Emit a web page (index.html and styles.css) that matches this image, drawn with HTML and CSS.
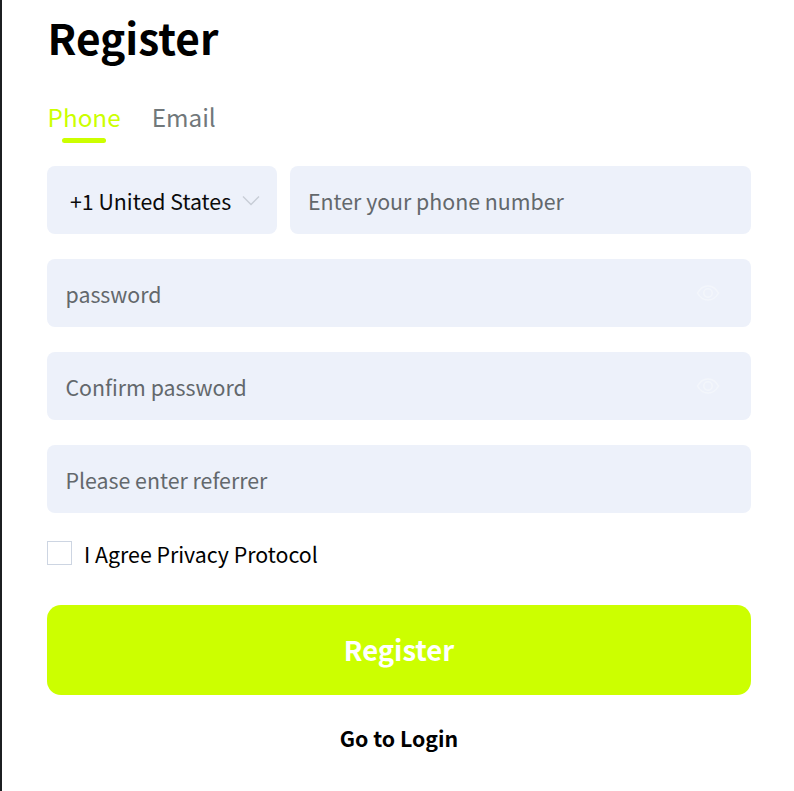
FILE: index.html
```html
<!DOCTYPE html>
<html lang="en">
<head>
<meta charset="utf-8">
<title>Register</title>
<link rel="stylesheet" href="styles.css">
</head>
<body>
<main class="page">
  <h1 class="title">Register</h1>
  <div class="tabs">
    <div class="tab tab-active">Phone</div>
    <div class="tab">Email</div>
  </div>
  <div class="row">
    <div class="field select">
      <span>+1 United States</span>
      <svg class="chev" width="18" height="11" viewBox="0 0 18 11"><path d="M1 1.500 9 9.500l8-8" fill="none" stroke="#c8cdd6" stroke-width="1.400"/></svg>
    </div>
    <div class="field grow"><span class="ph ph-phone">Enter your phone number</span></div>
  </div>
  <div class="field"><span class="ph">password</span>
    <svg class="eye" width="24" height="18" viewBox="0 0 24 18"><path d="M1.500 9C4 4.500 7.500 2 12 2s8 2.500 10.500 7C20 13.500 16.500 16 12 16S4 13.500 1.500 9Z" fill="none" stroke="#f3f6fb" stroke-width="1.500"/><circle cx="12" cy="9" r="4.200" fill="none" stroke="#f3f6fb" stroke-width="1.500"/></svg>
  </div>
  <div class="field"><span class="ph">Confirm password</span>
    <svg class="eye" width="24" height="18" viewBox="0 0 24 18"><path d="M1.500 9C4 4.500 7.500 2 12 2s8 2.500 10.500 7C20 13.500 16.500 16 12 16S4 13.500 1.500 9Z" fill="none" stroke="#f3f6fb" stroke-width="1.500"/><circle cx="12" cy="9" r="4.200" fill="none" stroke="#f3f6fb" stroke-width="1.500"/></svg>
  </div>
  <div class="field"><span class="ph">Please enter referrer</span></div>
  <div class="agree"><span class="box"></span><span class="agree-text">I Agree Privacy Protocol</span></div>
  <div class="submit">Register</div>
  <div class="login">Go to Login</div>
</main>
</body>
</html>
```
FILE: styles.css
```css
* { box-sizing: border-box; }
html, body { margin: 0; height: 791px; overflow: hidden; background: #fff; }
body { font-family: "Noto Sans CJK SC", "Noto Sans", sans-serif; color: #000; border-left: 2px solid #1c1f21; }
.page { width: 704px; margin-left: 45px; }
.title { margin: 0; font-size: 42.4px; font-weight: 700; line-height: 56px; padding: 9px 0 0 0.5px; height: 65px; }
.tabs { display: flex; gap: 31px; margin-top: 34px; height: 67px; padding-left: 0.5px; }
.tab { font-size: 24.3px; line-height: 36px; color: #71787b; position: relative; height: 36px; }
.tab-active { color: #ccff00; }
.tab-active::after { content: ""; position: absolute; left: 14.500px; right: 15px; top: 39px; height: 5px; border-radius: 3px; background: #ccff00; }
.row { display: flex; gap: 13px; margin-bottom: 25px; }
.row .field { margin-bottom: 0; }
.field { height: 68px; background: #edf1fa; border-radius: 8px; display: flex; align-items: center; padding: 0 19px; font-size: 21.33px; margin-bottom: 25px; justify-content: space-between; }
.select { width: 230px; padding: 0 17px 0 23px; color: #0a0a0a; flex: none; }
.grow { flex: 1; padding-left: 18px; }
.ph { color: #63686c; margin-left: -0.5px; }
.ph-phone { margin-left: 0; }
.eye { margin-right: 12px; }
.chev { flex: none; }
.agree { display: flex; align-items: flex-start; gap: 12px; font-size: 21.33px; height: 26px; margin-top: 28px; }
.agree-text { line-height: 26px; }
.box { width: 25px; height: 24px; border: 1px solid #cdd5e2; background: #fff; }
.submit { margin-top: 38px; height: 90px; padding-bottom: 2px; border-radius: 14px; background: #ccff00; color: #fff; font-size: 27.4px; font-weight: 700; display: flex; align-items: center; justify-content: center; }
.login { margin-top: 25px; text-align: center; font-size: 21.33px; font-weight: 700; line-height: 36px; }
```
